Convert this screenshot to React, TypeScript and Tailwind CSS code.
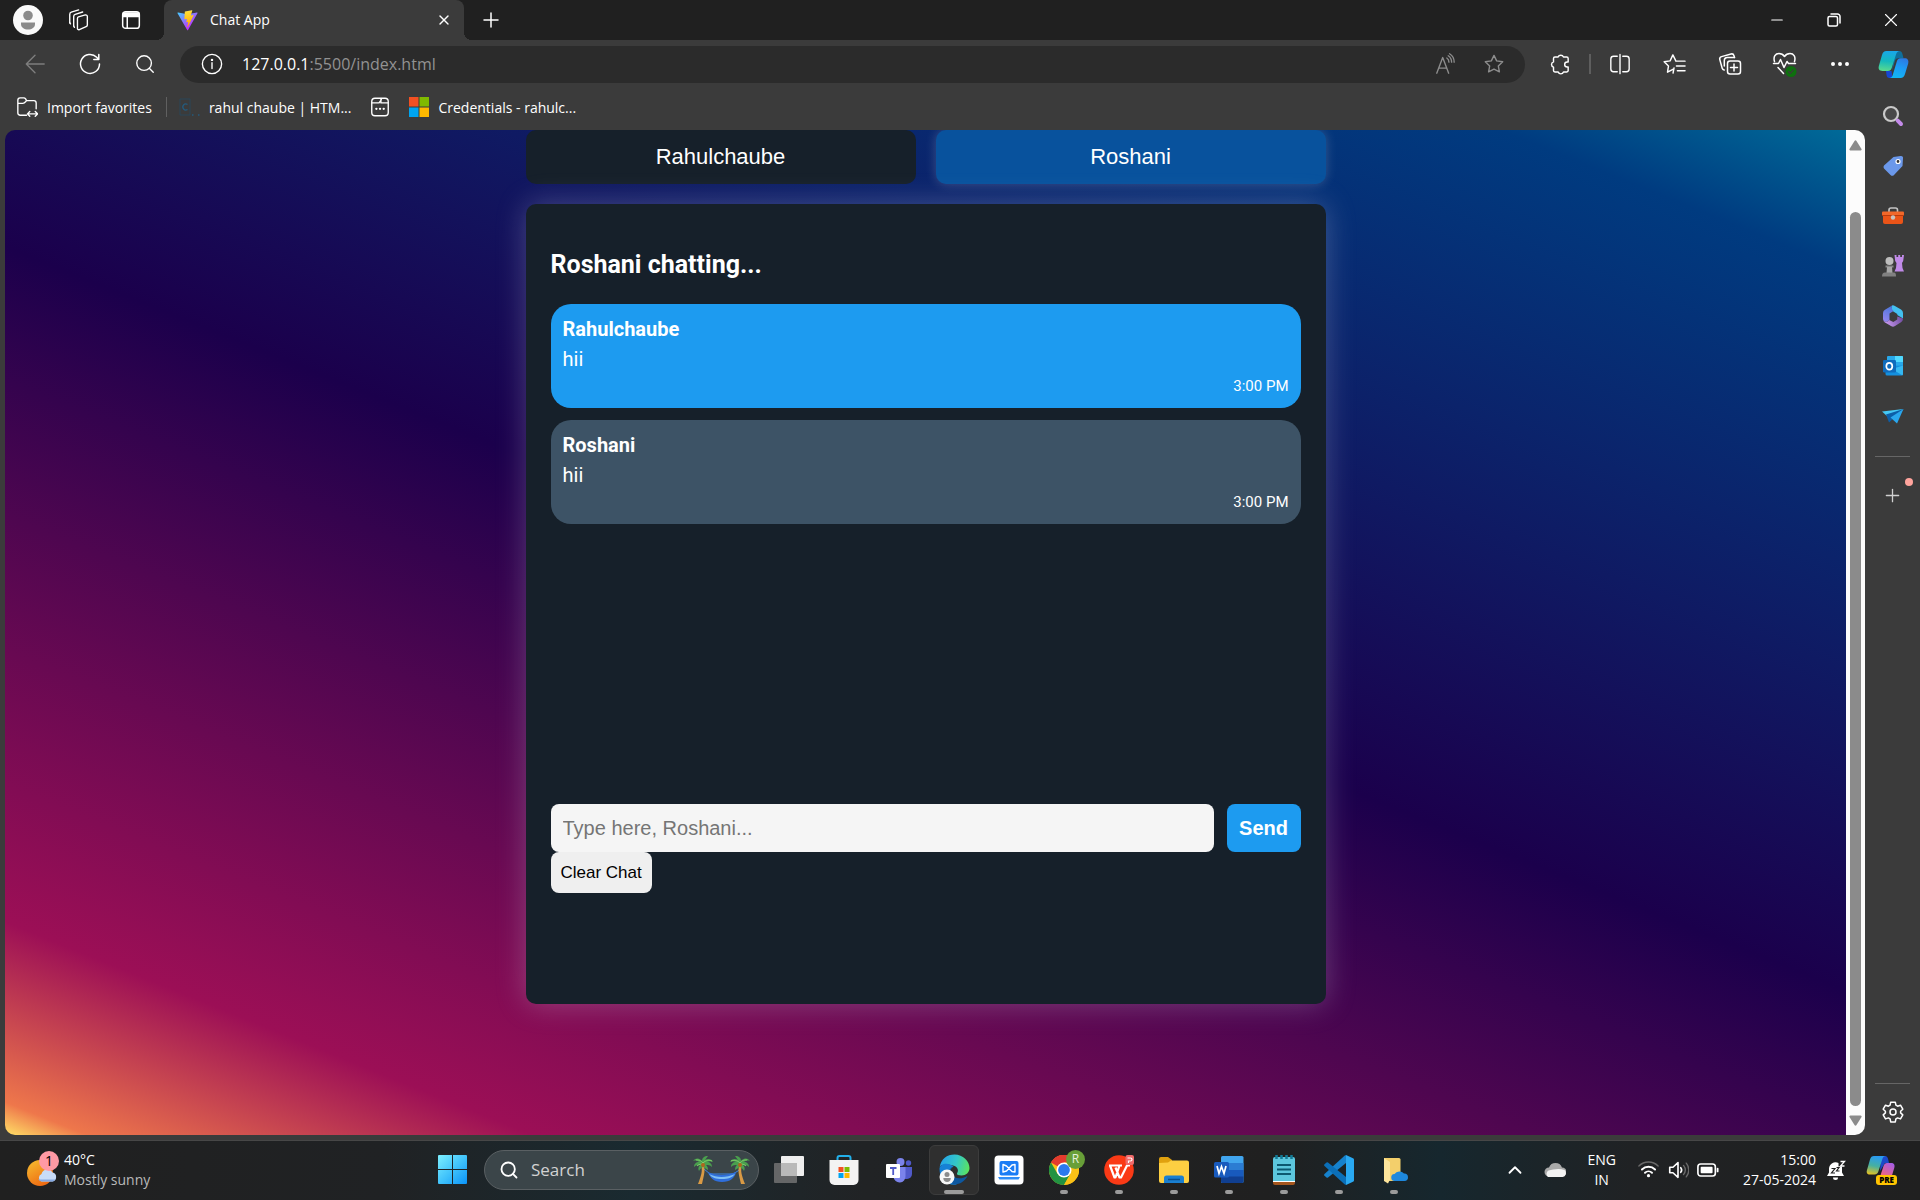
import React, { useState } from "react";
import {
  Search,
  X,
  Plus,
  Minus,
  ChevronUp,
  Ellipsis,
} from "lucide-react";

type IconProps = { size?: number; box?: string; children: React.ReactNode };

function Line({ size = 24, box = "0 0 24 24", children }: IconProps) {
  return (
    <svg width={size} height={size} viewBox={box} fill="none" stroke="currentColor" strokeWidth="1.5" strokeLinecap="round" strokeLinejoin="round" aria-hidden="true">
      {children}
    </svg>
  );
}

function Art({ size = 30, box = "0 0 30 30", children }: IconProps) {
  return (
    <svg width={size} height={size} viewBox={box} fill="none" aria-hidden="true">
      {children}
    </svg>
  );
}

const STAR = "M12 2.6l2.9 6 6.6.9-4.8 4.6 1.2 6.5L12 17.5l-5.9 3.1 1.2-6.5L2.5 9.5l6.6-.9z";

/* ---------- window chrome icons ---------- */

function Profile() {
  return (
    <Art>
      <circle cx="15" cy="15" r="15" fill="#fafafa" />
      <circle cx="15" cy="10.500" r="4.800" fill="#8b8b8b" />
      <path d="M8 17.500h14v1.500c0 3.600-3.200 5.500-7 5.500s-7-1.900-7-5.500z" fill="#8b8b8b" />
    </Art>
  );
}

function Workspaces() {
  return (
    <Line size={22}>
      <path d="M12.500 8.500l7.500-2a1.800 1.800 0 0 1 2.200 1.700v9.300c0 .9-.5 1.500-1.300 1.800l-7.500 3.200a1.400 1.400 0 0 1-2-1.300V10.300c0-.9.300-1.500 1.100-1.800z" />
      <path d="M7.300 18.500V8.300c0-1.200.6-2 1.600-2.400l8.200-2.600M3 15V6c0-1.300.6-2.100 1.700-2.500l8-2.500" />
      <path d="M7.300 18.500l.8 1.500M3 15l.8 1.200" />
    </Line>
  );
}

function TabActions() {
  return (
    <Line size={20}>
      <rect x="2" y="2" width="20" height="20" rx="3.500" strokeWidth="1.800" />
      <path d="M2.500 3.500h19v4.500h-19z" fill="currentColor" />
      <path d="M7.500 8v13.500" strokeWidth="1.800" />
    </Line>
  );
}

function ViteLogo() {
  return (
    <svg width="21" height="21" viewBox="0 0 410 404" fill="none" aria-hidden="true">
      <defs>
        <linearGradient id="viteBody" x1="6" y1="33" x2="235" y2="344" gradientUnits="userSpaceOnUse">
          <stop stopColor="#41d1ff" />
          <stop offset="1" stopColor="#bd34fe" />
        </linearGradient>
        <linearGradient id="viteBolt" x1="194.650" y1="8.800" x2="236" y2="293" gradientUnits="userSpaceOnUse">
          <stop stopColor="#ffea83" />
          <stop offset=".08" stopColor="#ffdd35" />
          <stop offset="1" stopColor="#ffa800" />
        </linearGradient>
      </defs>
      <path d="M399.641 59.525L215.643 388.545C211.844 395.338 202.084 395.378 198.228 388.618L10.582 59.556C6.381 52.190 12.680 43.267 21.028 44.759L205.223 77.682C206.398 77.892 207.601 77.890 208.776 77.676L389.119 44.806C397.439 43.290 403.768 52.143 399.641 59.525Z" fill="url(#viteBody)" />
      <path d="M292.965 1.574L156.801 28.255C154.563 28.694 152.906 30.590 152.771 32.866L144.395 174.330C144.198 177.662 147.258 180.248 150.510 179.498L188.420 170.749C191.967 169.931 195.172 173.055 194.443 176.622L183.180 231.775C182.422 235.487 185.907 238.661 189.532 237.560L212.947 230.446C216.577 229.344 220.065 232.527 219.297 236.242L201.398 322.875C200.278 328.294 207.486 331.249 210.492 326.603L212.500 323.500L323.454 102.072C325.312 98.365 322.108 94.137 318.036 94.923L279.014 102.454C275.347 103.161 272.227 99.746 273.262 96.158L298.731 7.867C299.767 4.273 296.636 .855 292.965 1.574Z" fill="url(#viteBolt)" />
    </svg>
  );
}

const Restore = () => (
  <Line size={14} box="0 0 14 14">
    <rect x="1" y="3.500" width="9.500" height="9.500" rx="1.500" />
    <path d="M4 1h6.500A2.500 2.500 0 0 1 13 3.500V10" />
  </Line>
);
const Back = () => (
  <Line size={22}>
    <path d="M22 12H2.500M12 2.500L2.500 12l9.500 9.500" />
  </Line>
);
const Reload = () => (
  <Line size={24}>
    <path d="M21.500 12A9.500 9.500 0 1 1 18.700 5.200l1.800 2M20.800 2.500v5h-5" />
  </Line>
);
const Info = () => (
  <Line size={22}>
    <circle cx="12" cy="12" r="10.500" />
    <path d="M12 10.500v6.500" />
    <circle cx="12" cy="7.500" r=".6" fill="currentColor" />
  </Line>
);
const ReadAloud = () => (
  <Line size={22}>
    <path d="M3 22L9.500 5 16 22M5.300 16.500h8.500M14 5.500c1.500 1 2.300 2.500 2.300 4.500M15.500 3c2.400 1.500 3.700 4 3.700 7M17 .8c3 1.800 5 4.800 5 9.200" />
  </Line>
);
const Puzzle = () => (
  <Line size={23}>
    <path d="M8.200 4.200h1.300a3 3 0 0 1 5.600 0h3.400a1.500 1.500 0 0 1 1.500 1.500v3.600h-1a2.600 2.600 0 0 0 0 5.300h1v3.700a1.500 1.500 0 0 1-1.500 1.500h-3.400a2.900 2.900 0 0 1-5.500 0H6.200a1.500 1.500 0 0 1-1.500-1.500v-3.600a2.800 2.800 0 0 1 0-5.400V5.700a1.500 1.500 0 0 1 1.500-1.500z" />
  </Line>
);
const Split = () => (
  <Line size={22}>
    <path d="M9 3.500H5A3 3 0 0 0 2 6.500v11a3 3 0 0 0 3 3h4M15 3.500h4a3 3 0 0 1 3 3v11a3 3 0 0 1-3 3h-4M12 1.500v21" />
  </Line>
);
const Favorites = () => (
  <Line size={23}>
    <path d="M13.500 8.500L10.300 2 7.400 8.200l-6.200.9 4.500 4.500-1 6.400 5.600-3M14.500 8.500H23M14 13.500h9M15 18.500h8M10.500 21l1-5.500" />
  </Line>
);
const Collections = () => (
  <Line size={24}>
    <rect x="9.500" y="9" width="13" height="13" rx="2.500" />
    <path d="M16 12v7M12.500 15.500h7M16.500 5.500l-.5-1.800A2.500 2.500 0 0 0 13 2L3.500 4.600a2.500 2.500 0 0 0-1.700 3l2.400 8.600c.3 1 1 1.600 2 1.800" />
    <path d="M6.300 14V8.500A3 3 0 0 1 9.300 5.500h7.200" />
  </Line>
);
const Essentials = () => (
  <Line size={25} box="0 0 25 25">
    <path d="M2.500 9.500C1 4.500 3.500 1.500 7 1.500c2.500 0 4.300 1.200 5.500 3 1.200-1.800 3-3 5.500-3 3.500 0 6 3 4.500 8M1.500 11.500h5l2-4 3.500 8 3-6 1.500 2h7M6 15.500l5.500 6" />
    <circle cx="19" cy="19.500" r="5.500" fill="#0e700e" stroke="none" />
    <path d="M16.600 19.700l1.700 1.600 3-3.300" stroke="#3b3b3b" strokeWidth="1.200" />
  </Line>
);
const ImportFolder = () => (
  <Line size={22}>
    <path d="M11.500 21H4.500A2.500 2.500 0 0 1 2 18.500v-14A2.500 2.500 0 0 1 4.500 2h4c1 0 1.500.5 2 1.200L11.500 5h8A2.500 2.500 0 0 1 22 7.500V14M2 8h5.500c1.500 0 2-.5 2.700-1.500L11.500 5M13 19.500h10M15 17l-2.500 2.500L15 22M21 17l2.500 2.500L21 22" />
  </Line>
);
const SavedPage = () => (
  <Line size={22}>
    <rect x="3" y="2.500" width="18" height="19" rx="3.500" />
    <path d="M3 7.500h8l2.500-3.500M13 3.500v4h8" />
    <path d="M8 14h.1M12 14h.1M16 14h.1" strokeWidth="2.500" />
  </Line>
);
const Gear = () => (
  <Line size={24}>
    <path d="M9.700 2.200h4.600l.6 3 1.700 1 2.900-1 2.300 4-2.200 2v1.700l2.200 2-2.300 4-2.900-1-1.700 1-.6 3H9.700l-.6-3-1.700-1-2.900 1-2.300-4 2.200-2v-1.700l-2.200-2 2.300-4 2.900 1 1.700-1z" />
    <circle cx="12" cy="12" r="3" />
  </Line>
);

function MicrosoftTiles() {
  return (
    <Art size={20} box="0 0 20 20">
      <path d="M0 0h9.500v9.500H0z" fill="#f25022" />
      <path d="M10.500 0H20v9.500h-9.500z" fill="#7fba00" />
      <path d="M0 10.500h9.500V20H0z" fill="#00a4ef" />
      <path d="M10.500 10.500H20V20h-9.500z" fill="#ffb900" />
    </Art>
  );
}

function Copilot() {
  return (
    <Art size={31} box="0 0 31 31">
      <defs>
        <linearGradient id="coA" x1="8" y1="2" x2="6" y2="22" gradientUnits="userSpaceOnUse">
          <stop stopColor="#19a7e8" />
          <stop offset=".5" stopColor="#14b8bd" />
          <stop offset="1" stopColor="#5bdb8d" />
        </linearGradient>
        <linearGradient id="coB" x1="26" y1="8" x2="18" y2="29" gradientUnits="userSpaceOnUse">
          <stop stopColor="#2f74e0" />
          <stop offset=".5" stopColor="#1d9bf5" />
          <stop offset="1" stopColor="#12b6f2" />
        </linearGradient>
      </defs>
      <path d="M17 2h4c2.500 0 3 1.500 3.700 4l.8 3.200h-5c-2 0-3 .8-3.500 2.500L14 22z" fill="#0f6f9c" />
      <path d="M8 22h5.500L14.500 29h-3c-2 0-2.700-1-3-3z" fill="#1647d2" />
      <path d="M8.500 2H22c-2.200 0-3.300 1.300-4 3.500l-4.200 13.300c-.7 2.200-1.800 3.200-4 3.200H4.500c-3.200 0-4.500-2-3.600-5.200L4 6c.8-2.800 2-4 4.500-4z" fill="url(#coA)" />
      <path d="M22.500 29H11c2 0 3.200-1.200 3.800-3.300l4-13.300c.7-2.200 1.800-3.200 4-3.200h3.700c3.200 0 4.500 2 3.700 5.200L27 25c-.8 2.800-2 4-4.500 4z" fill="url(#coB)" />
    </Art>
  );
}

/* ---------- sidebar icons ---------- */

const SideSearch = () => (
  <Art size={22} box="0 0 22 22">
    <circle cx="9" cy="9" r="7" stroke="#c9c9c9" strokeWidth="2.200" fill="#484848" />
    <path d="M15.700 15.700l3.300 3.300" stroke="#c48bea" strokeWidth="4" strokeLinecap="round" />
  </Art>
);
const SideTag = () => (
  <Art size={22} box="0 0 22 22">
    <path d="M11.500 2L18.500 1A2 2 0 0 1 21 3.500L20.500 11 12 20a2.500 2.500 0 0 1-3.500 0L2 13.500A2.500 2.500 0 0 1 2 10.500z" fill="#6b98ea" />
    <circle cx="16" cy="6.500" r="2" fill="#333" stroke="#fff" strokeWidth="1.200" />
  </Art>
);
const SideToolbox = () => (
  <Art size={22} box="0 0 22 22">
    <path d="M7 7V5a2 2 0 0 1 2-2h4.500a2 2 0 0 1 2 2v2" stroke="#c4c4c4" strokeWidth="1.600" />
    <rect y="6.500" width="22" height="4" rx="1" fill="#f2682a" />
    <path d="M1 10.500h20V17a2 2 0 0 1-2 2H3a2 2 0 0 1-2-2z" fill="#ea5418" />
    <path d="M0 10.500h22" stroke="#b93a0c" />
    <circle cx="11" cy="12.500" r="2.200" fill="#c9c4c0" />
  </Art>
);
const SideChess = () => (
  <Art size={22} box="0 0 22 22">
    <path d="M12.500 0h2v2h1.700V0h2v2H20V0h2l-.8 6-1.200 2 .5 5 1.500 3.500h-9.500L14 13l.5-5-1.300-2z" fill="#c08ae8" />
    <circle cx="7.500" cy="6" r="4" fill="#bdbdbd" />
    <path d="M3.500 10.500h8v2h-8z" fill="#8a8a8a" />
    <path d="M5 12h5l.5 6h-6z" fill="#a6a6a6" />
    <path d="M3 17.500h9c1.500 0 2 1.500 2 4H0c0-2.500 1-4 3-4z" fill="#808080" />
  </Art>
);
const SideM365 = () => (
  <Art size={22} box="0 0 22 22">
    <defs>
      <linearGradient id="m365a" x1="12" y1="0" x2="2" y2="18" gradientUnits="userSpaceOnUse">
        <stop stopColor="#3f74d8" />
        <stop offset="1" stopColor="#9a86f0" />
      </linearGradient>
      <linearGradient id="m365b" x1="4" y1="20" x2="21" y2="13" gradientUnits="userSpaceOnUse">
        <stop stopColor="#c99af0" />
        <stop offset="1" stopColor="#6e4a9e" />
      </linearGradient>
    </defs>
    <path d="M10 .5a3 3 0 0 1 2.500.2L19 4.500A4 4 0 0 1 21 8v5.500L15.300 10V9L9 5z" fill="#43c0f0" />
    <path d="M10.500.3L3 4.700A4 4 0 0 0 1 8v6a3 3 0 0 0 4.500 2.500L7.500 15V8.500L11.500 6c-2-2-2.300-4-1-5.700z" fill="url(#m365a)" />
    <path d="M1.300 15.500c1.500 2 3.500 1.500 5 .5l1-1 4 2 4-2.500V11.500L21 13.500c0 1.800-.7 3-2 3.800l-6 3.800a4 4 0 0 1-4 0L3 17.500a4 4 0 0 1-1.700-2z" fill="url(#m365b)" />
  </Art>
);
const SideOutlook = () => (
  <Art size={22} box="0 0 22 22">
    <path d="M5 2a1 1 0 0 1 1-1h14a1 1 0 0 1 1 1v10H5z" fill="#28a8ea" />
    <path d="M13 1h7a1 1 0 0 1 1 1v5h-8z" fill="#50d9ff" />
    <path d="M3.500 11L21 10.500V19a1.500 1.500 0 0 1-1.500 1.500H5A1.500 1.500 0 0 1 3.500 19z" fill="#1490df" />
    <path d="M21 10.500V19a1.500 1.500 0 0 1-.8 1.300L10 14z" fill="#35b8f1" />
    <rect x="1" y="5" width="13" height="12.500" rx="1.200" fill="#0f6cbd" />
    <ellipse cx="7.300" cy="11.200" rx="3" ry="3.400" stroke="#fff" strokeWidth="1.700" />
  </Art>
);
const SideTelegram = () => (
  <Art size={22} box="0 0 22 22">
    <path d="M0 6.500L21.500 4 6 12z" fill="#45c8f5" />
    <path d="M4 9.500L21.500 4 7 17.500z" fill="#0d5ea8" />
    <path d="M8.500 12.500L21.500 4 15 18.500z" fill="#2aa7ee" />
  </Art>
);

/* ---------- taskbar icons ---------- */

const Weather = () => (
  <Art size={34} box="0 0 34 34">
    <defs>
      <linearGradient id="sun" x1="4" y1="8" x2="18" y2="32" gradientUnits="userSpaceOnUse">
        <stop stopColor="#f5b92e" />
        <stop offset="1" stopColor="#ee6a12" />
      </linearGradient>
    </defs>
    <circle cx="14" cy="20" r="13" fill="url(#sun)" />
    <path d="M15.500 28.500a4 4 0 0 1 0-7.500 6 6 0 0 1 11-1.500 4.600 4.600 0 0 1 0 9z" fill="#c8dcf8" />
    <path d="M12 26.500h17.500l-2.500 2H15z" fill="#86a9e2" />
  </Art>
);
const Start = () => (
  <Art size={29} box="0 0 29 29">
    <defs>
      <linearGradient id="win" x1="0" y1="0" x2="29" y2="29" gradientUnits="userSpaceOnUse">
        <stop stopColor="#7df0ff" />
        <stop offset=".5" stopColor="#42c4fb" />
        <stop offset="1" stopColor="#0a93f8" />
      </linearGradient>
    </defs>
    <path d="M1 0h13v14H0V1a1 1 0 0 1 1-1zM15 0h13a1 1 0 0 1 1 1v13H15zM0 15h14v14H1a1 1 0 0 1-1-1zM15 15h14v13a1 1 0 0 1-1 1H15z" fill="url(#win)" />
  </Art>
);

function Palm({ flip }: { flip?: boolean }) {
  return (
    <g transform={flip ? "translate(57 0) scale(-1 1)" : undefined}>
      <path d="M10 9c3 5 1 11-1 20H5c3-8 5-13 3-19z" fill="#d99a45" />
      <path d="M10 7C7 3 3 2 0 6c3-1 5 0 6 1-3 0-5 2-5 5 2-2 4-2 6-2-2 2-2 4-1 6 1-2 2-3 4-4 2 1 3 2 5 3 0-3-1-4-2-5 2 0 4 0 6 2 0-3-2-5-5-5 2-1 4-1 6 0-1-3-5-4-8-2l3-4c-4 0-6 2-6 5z" fill="#4aa04e" />
      <path d="M10 8C8 5 5 5 3 5M10 8c3-3 6-3 9-2M9 9c-2 0-4 1-5 2" stroke="#86cf6b" />
      <circle cx="10" cy="10" r="2" fill="#b0651d" />
    </g>
  );
}
const Hammock = () => (
  <svg width="57" height="30" viewBox="0 0 57 30" fill="none" aria-hidden="true">
    <path d="M11 14l6 5h23l8-5" stroke="#3b86e8" />
    <path d="M15 17c8 4 18 4 28 0-1 6-6 10-14 10s-12-4-14-10z" fill="#2f6fdc" />
    <path d="M16 19c8 4 17 4 26 0-3 4-7 5-13 5s-10-1-13-5z" fill="#7fc0f4" />
    <Palm />
    <Palm flip />
  </svg>
);
const TaskView = () => (
  <Art size={30} box="0 0 30 30">
    <rect x="7" y="1" width="23" height="20" rx="1" fill="#eee" />
    <rect x="0" y="8" width="23" height="20" rx="1" fill="#777" fillOpacity=".8" />
    <path d="M7 8h16v13H7z" fill="#b9b9b9" />
  </Art>
);
const Store = () => (
  <Art>
    <path d="M8.500 6V3a2 2 0 0 1 2-2h9a2 2 0 0 1 2 2v3" stroke="#22b0ea" strokeWidth="2" />
    <path d="M.5 5h29v20a5 5 0 0 1-5 5h-19a5 5 0 0 1-5-5z" fill="#f3f3f3" />
    <path d="M9.500 12h5v5h-5z" fill="#f25022" />
    <path d="M15.500 12h5v5h-5z" fill="#7fba00" />
    <path d="M9.500 18h5v5h-5z" fill="#00a4ef" />
    <path d="M15.500 18h5v5h-5z" fill="#ffb900" />
  </Art>
);
const Teams = () => (
  <Art size={28} box="0 0 28 28">
    <circle cx="15.500" cy="6" r="4" fill="#7b83eb" />
    <circle cx="23.500" cy="7" r="2.700" fill="#5059c9" />
    <path d="M18 11h9v7a5 5 0 0 1-5 5h-4z" fill="#5059c9" />
    <path d="M8 11h12.500v9a6 6 0 0 1-12 1z" fill="#7b83eb" />
    <rect x="1" y="8" width="14" height="14" rx="1" fill="#fff" />
    <path d="M5 12h6.500M8.200 12v7" stroke="#5059c9" strokeWidth="1.800" />
  </Art>
);
const Edge = () => (
  <Art size={31} box="0 0 31 31">
    <defs>
      <linearGradient id="edgeTop" x1="2" y1="8" x2="30" y2="16" gradientUnits="userSpaceOnUse">
        <stop stopColor="#25a5e8" />
        <stop offset=".5" stopColor="#33c6c8" />
        <stop offset="1" stopColor="#5ce55c" />
      </linearGradient>
    </defs>
    <path d="M.7 13C2 5 8 .5 15.500.5 24 .5 30.500 7 30.500 14c0 4.500-3.500 7.500-8 7.500-3 0-5-1-4.500-2.300 2-2.200 1-6.700-4-7.700C8 10 2.500 10 .7 13z" fill="url(#edgeTop)" />
    <path d="M.5 15c0-4.500 6-6.500 10.500-4.500 2.500 1 3.500 2 3.500 2-4 2-6 6-4 11 1.500 4 4 6.500 7.500 7C8 32 .5 25 .5 15z" fill="#1681d6" />
    <path d="M14.500 12.500c-3 2-4 5-2 8 2.500 4 9 5.500 16 1.500-3 6-9 9-14 8.300-6-3-8-14 0-17.800z" fill="#0d579f" />
    <circle cx="8" cy="23" r="7.500" fill="#f7f7f7" />
    <circle cx="8" cy="20.500" r="2.500" fill="#8b8b8b" />
    <path d="M4.300 24h7.500c0 2.700-1.600 4-3.700 4s-3.800-1.300-3.800-4z" fill="#8b8b8b" />
  </Art>
);
const Laptop = () => (
  <Art>
    <rect x=".5" y=".5" width="29" height="29" rx="4" fill="#fff" />
    <rect x="5.500" y="6" width="19" height="14.500" rx="2" fill="#1b7cf5" />
    <path d="M4 22h22l-1.500 2.500h-19z" fill="#2f8df8" />
    <path d="M9 17V9.500l3.500 1.500 5.500 5.500 3 .5V9.500l-3 .5-5.500 6z" stroke="#fff" strokeWidth="1.400" strokeLinejoin="round" />
  </Art>
);
const Chrome = () => (
  <Art>
    <circle cx="15" cy="15" r="15" fill="#fbc116" />
    <path d="M15 15L2 7.500A15 15 0 0 1 28 7.500H15z" fill="#e33b2e" />
    <path d="M15 7.500h13A15 15 0 0 0 2 7.500z" fill="#e33b2e" />
    <path d="M2 7.500A15 15 0 0 0 15 30l6.500-11.300L15 15 8.500 18.700z" fill="#229342" />
    <path d="M21.500 18.700L15 30A15 15 0 0 0 28 7.500H15z" fill="#fbc116" />
    <circle cx="15" cy="15" r="7.500" fill="#fff" />
    <circle cx="15" cy="15" r="5.900" fill="#2a79ee" />
  </Art>
);
const Wps = () => (
  <Art>
    <circle cx="15" cy="15" r="14.800" fill="#fa3a16" />
    <path d="M5 10.500h13M6 10.500l4.500 12h1l4-12M11.500 12.500l4 10h1.500l6-12h3" stroke="#fff" strokeWidth="2.200" strokeLinejoin="round" />
    <rect x="21.500" y="0" width="8.500" height="10" rx="2" fill="#f06a6a" />
    <path d="M23.500 3h3a1.500 1.500 0 0 1 0 3h-2v2" stroke="#fff" strokeWidth="1.200" />
  </Art>
);
const Explorer = () => (
  <Art>
    <path d="M0 4a2 2 0 0 1 2-2h7l4 3v5H0z" fill="#e0a10f" />
    <path d="M0 8l9-.5L12 5.500h16a2 2 0 0 1 2 2V26a2 2 0 0 1-2 2H2a2 2 0 0 1-2-2z" fill="#fdcf42" />
    <path d="M5 28v-5a2.500 2.500 0 0 1 2.500-2.500h15A2.500 2.500 0 0 1 25 23v5z" fill="#1a7fd0" />
    <path d="M9 24.500h12" stroke="#0b4f8c" strokeWidth="1.500" />
  </Art>
);
const Word = () => (
  <Art>
    <rect x="7" y="1" width="22.500" height="27" rx="1.500" fill="#41a5ee" />
    <path d="M7 8h22.500v7H7z" fill="#2b7cd3" />
    <path d="M7 15h22.500v7H7z" fill="#185abd" />
    <path d="M7 21.500h22.500v5A1.500 1.500 0 0 1 28 28H8.500A1.500 1.500 0 0 1 7 26.500z" fill="#103f91" />
    <rect x="0" y="7" width="15" height="15.500" rx="1.500" fill="#185abd" />
    <path d="M3 11l2 7.500L7.500 11.500 10 18.500 12 11" stroke="#fff" strokeWidth="1.700" />
  </Art>
);
const Notepad = () => (
  <Art>
    <path d="M4 25h22v3a2 2 0 0 1-2 2H6a2 2 0 0 1-2-2z" fill="#a5561d" />
    <path d="M4 24h22v3H4z" fill="#fff" />
    <path d="M4 4a2 2 0 0 1 2-2h18a2 2 0 0 1 2 2v22H4z" fill="#5cc6dd" />
    <path d="M8 10h14M8 14.500h14M8 19h14" stroke="#0c5870" strokeWidth="1.800" />
    <path d="M7.500 0v4M12.500 0v4M17.500 0v4M22.500 0v4" stroke="#127b96" strokeWidth="2.500" />
  </Art>
);
const VsCode = () => (
  <Art>
    <path d="M22 30l7-3.300a1.500 1.500 0 0 0 1-1.500V4.700a1.500 1.500 0 0 0-1-1.400L22 0z" fill="#29a9f2" />
    <path d="M22 0v8L4 22.500a1.200 1.200 0 0 1-1.500 0L.5 20.800a1.200 1.200 0 0 1 0-1.700L20.500.7z" fill="#1682cd" />
    <path d="M22 30v-8L4 7.500a1.200 1.200 0 0 0-1.500 0L.5 9.200a1.200 1.200 0 0 0 0 1.700l20 18.400z" fill="#0b6fb8" />
  </Art>
);
const CloudFolder = () => (
  <Art>
    <path d="M5 3h15a1.500 1.500 0 0 1 1.500 1.500V26H5z" fill="#f3cf6b" />
    <path d="M5 3l6 4v17.500l-2 4L5 26z" fill="#fde59c" />
    <path d="M16 26a3.500 3.500 0 0 1-.5-7A6 6 0 0 1 25 18.500a3.700 3.700 0 0 1 .5 7.500z" fill="#1e88dd" />
  </Art>
);
const Cloud = () => (
  <Art size={22} box="0 0 22 22">
    <path d="M5 17.500a4.500 4.500 0 0 1 0-9A7 7 0 0 1 18 8.500a4.500 4.500 0 0 1 0 9z" fill="#a9a9a9" />
    <path d="M4 18a4 4 0 0 1 .5-6.500C9 10.500 15 9 20.500 11a4 4 0 0 1-2 7z" fill="#f3f3f3" />
  </Art>
);
const Wifi = () => (
  <Line size={21}>
    <path d="M1 8a15.500 15.500 0 0 1 22 0" stroke="#6a6a6a" />
    <path d="M4.500 12a10.700 10.700 0 0 1 15 0M8 15.700a5.800 5.800 0 0 1 8 0" strokeWidth="2.200" />
    <circle cx="12" cy="19" r="1.800" fill="currentColor" stroke="none" />
  </Line>
);
const Speaker = () => (
  <Line size={22}>
    <path d="M3 9h3.500L12 4v16l-5.500-5H3z" strokeWidth="1.800" />
    <path d="M15 9.500a4 4 0 0 1 0 5" strokeWidth="1.800" />
    <path d="M18 7a8 8 0 0 1 0 10M21 4.500a11.500 11.500 0 0 1 0 15" stroke="#6a6a6a" />
  </Line>
);
const Battery = () => (
  <Line size={22}>
    <rect x="1" y="5.500" width="19" height="13" rx="3" strokeWidth="1.800" />
    <rect x="4" y="8.500" width="13" height="7" rx="1" fill="currentColor" stroke="none" />
    <path d="M22.500 10.500v3" strokeWidth="2" />
  </Line>
);
const Bell = () => (
  <Art size={20} box="0 0 20 20">
    <path d="M1 16l2-3.500V8.500A6.500 6.500 0 0 1 12.500 3v3.500H16v6l2 3.500z" fill="#fff" />
    <path d="M7 17.500h5a2.500 2.500 0 0 1-5 0z" fill="#fff" />
    <path d="M5.500 8.500h3.500l-3.500 4.500H9M10.500 7.500h2.500l-2.500 3.500h3" stroke="#202020" strokeWidth="1.200" />
    <path d="M14.500 1.500h4l-4 4.500h4" stroke="#fff" strokeWidth="1.300" />
  </Art>
);
const CopilotPre = () => (
  <Art size={30} box="0 0 30 30">
    <defs>
      <linearGradient id="preA" x1="8" y1="1" x2="4" y2="20" gradientUnits="userSpaceOnUse">
        <stop stopColor="#2a9bf0" />
        <stop offset=".5" stopColor="#46b0a0" />
        <stop offset="1" stopColor="#f2c319" />
      </linearGradient>
      <linearGradient id="preB" x1="26" y1="8" x2="18" y2="22" gradientUnits="userSpaceOnUse">
        <stop stopColor="#a45de8" />
        <stop offset="1" stopColor="#f4667c" />
      </linearGradient>
    </defs>
    <path d="M15 1h4c2 0 2.700 1.500 3.200 3.500L23 8h-4l-5 8z" fill="#1c49c9" />
    <path d="M8 1h12c-2 0-3 1.200-3.700 3.200L12.500 16c-.6 2-1.700 3.500-4 3.500H4C1 19.500.2 17.500 1 15L4 4.500C4.700 2 6 1 8 1z" fill="url(#preA)" />
    <path d="M14 22l3.500-11c.7-2 1.700-3 3.500-3h4c3 0 4 2 3.300 4.800L25.500 22z" fill="url(#preB)" />
  </Art>
);

/* ---------- page parts ---------- */

function IconButton({ label, children, className = "" }: { label: string; children: React.ReactNode; className?: string }) {
  return (
    <button type="button" aria-label={label} className={"flex h-10 w-[55px] shrink-0 items-center justify-center " + className}>
      {children}
    </button>
  );
}

function TabStrip() {
  return (
    <header className="flex h-10 shrink-0 items-stretch bg-[#202020]">
      <div className="flex w-[164px] items-center gap-8 pl-[13px]">
        <button type="button" aria-label="Profile" className="-mr-2"><Profile /></button>
        <button type="button" aria-label="Workspaces"><Workspaces /></button>
        <button type="button" aria-label="Tab actions"><TabActions /></button>
      </div>
      <div className="relative flex w-[300px] items-center gap-3 rounded-t-lg bg-[#3b3b3b] pr-3 pl-[13px]">
        <span className="absolute bottom-0 -left-2 size-2 bg-[radial-gradient(circle_at_0_0,#202020_8px,#3b3b3b_8px)]" />
        <span className="absolute -right-2 bottom-0 size-2 bg-[radial-gradient(circle_at_100%_0,#202020_8px,#3b3b3b_8px)]" />
        <ViteLogo />
        <span className="flex-1 pb-[2px] text-[14px]">Chat App</span>
        <button type="button" aria-label="Close tab"><X size={16} strokeWidth={2} /></button>
      </div>
      <button type="button" aria-label="New tab" className="flex w-[53px] items-center justify-center"><Plus size={24} strokeWidth={1.500} /></button>
      <div className="flex-1" />
      <button type="button" aria-label="Minimize" className="flex w-[57px] items-center justify-center"><Minus size={18} strokeWidth={1.500} /></button>
      <button type="button" aria-label="Restore" className="flex w-[57px] items-center justify-center"><Restore /></button>
      <button type="button" aria-label="Close" className="flex w-[58px] items-center justify-center"><X size={22} strokeWidth={1.200} /></button>
    </header>
  );
}

function Toolbar() {
  return (
    <div className="flex h-12 shrink-0 items-center pl-[7px]">
      <IconButton label="Back" className="text-[#7e7e7e]"><Back /></IconButton>
      <IconButton label="Reload"><Reload /></IconButton>
      <IconButton label="Search"><Search size={22} strokeWidth={1.500} /></IconButton>
      <div className="mx-2 flex h-[37px] flex-1 items-center rounded-full bg-[#2b2b2b] pl-[21px]">
        <Info />
        <p className="ml-[19px] flex-1 text-[16px] text-[#929292]"><span className="text-white">127.0.0.1</span>:5500/index.html</p>
        <button type="button" aria-label="Read aloud" className="mr-[27px] text-[#8d8d8d]"><ReadAloud /></button>
        <button type="button" aria-label="Add to favorites" className="mr-5 text-[#8d8d8d]"><Line size={22}><path d={STAR} /></Line></button>
      </div>
      <IconButton label="Extensions"><Puzzle /></IconButton>
      <span className="mx-[1px] h-5 w-[2px] bg-[#5e5e5e]" />
      <IconButton label="Split screen"><Split /></IconButton>
      <IconButton label="Favorites"><Favorites /></IconButton>
      <IconButton label="Collections"><Collections /></IconButton>
      <IconButton label="Browser essentials"><Essentials /></IconButton>
      <IconButton label="Settings and more"><Ellipsis size={24} strokeWidth={2} /></IconButton>
      <button type="button" aria-label="Copilot" className="flex w-[53px] shrink-0 items-center justify-center"><Copilot /></button>
    </div>
  );
}

function Bookmarks() {
  return (
    <nav className="flex h-[42px] shrink-0 items-center pb-1 pl-[11px] text-[14px]">
      <a href="#import" className="flex items-center gap-[9px]"><ImportFolder />Import favorites</a>
      <span className="mr-3 ml-[14px] h-5 w-px bg-[#606060]" />
      <a href="#site" className="flex items-center gap-[9px]">
        <Art size={21} box="0 0 21 21">
          <path d="M1 2h10v16H1z" stroke="#2b4658" />
          <path d="M8.500 7.500a3 3 0 1 0 0 5M13 18h1.500M19 18h1.500" stroke="#245b7d" strokeWidth="1.300" />
        </Art>
        rahul chaube | HTM...
      </a>
      <a href="#saved" aria-label="Saved page" className="ml-[18px]"><SavedPage /></a>
      <a href="#credentials" className="ml-[18px] flex items-center gap-[9px]"><MicrosoftTiles />Credentials - rahulc...</a>
    </nav>
  );
}

const SIDE = [
  { label: "Search", icon: <SideSearch /> },
  { label: "Shopping", icon: <SideTag /> },
  { label: "Tools", icon: <SideToolbox /> },
  { label: "Games", icon: <SideChess /> },
  { label: "Microsoft 365", icon: <SideM365 /> },
  { label: "Outlook", icon: <SideOutlook /> },
  { label: "Drop", icon: <SideTelegram /> },
];

function Sidebar() {
  return (
    <aside className="flex w-[55px] shrink-0 flex-col items-center pt-[3px]">
      {SIDE.map((s) => (
        <button key={s.label} type="button" aria-label={s.label} className="flex h-[50px] w-full items-center justify-center">{s.icon}</button>
      ))}
      <span className="mt-[15px] h-px w-[35px] bg-[#666]" />
      <button type="button" aria-label="Customize" className="relative mt-[13px] flex h-[50px] w-full items-center justify-center text-[#d0d0d0]">
        <Plus size={21} strokeWidth={1.500} />
        <span className="absolute top-2 right-[7px] size-2 rounded-full bg-[#ffa49d]" />
      </button>
      <span className="mt-auto h-px w-[35px] bg-[#666]" />
      <button type="button" aria-label="Settings" className="flex h-14 w-full items-center justify-center"><Gear /></button>
    </aside>
  );
}

const PEOPLE = ["Rahulchaube", "Roshani"];
const MESSAGES = [
  { from: "Rahulchaube", text: "hii", time: "3:00 PM" },
  { from: "Roshani", text: "hii", time: "3:00 PM" },
];

function Chat() {
  const [me, setMe] = useState("Roshani");
  const [messages, setMessages] = useState(MESSAGES);
  const [draft, setDraft] = useState("");

  const send = (e: React.FormEvent) => {
    e.preventDefault();
    if (!draft) return;
    setMessages([...messages, { from: me, text: draft, time: "3:00 PM" }]);
    setDraft("");
  };

  return (
    <main className="flex-1 overflow-hidden bg-[linear-gradient(22deg,#ffe066_0%,#ee774b_1.9%,#9c0f56_12.2%,#1b004c_50.8%,#003b80_92%,#006a98_100%)] font-['Roboto',sans-serif]">
      <div className="mx-auto flex max-w-[800px] flex-col gap-5">
        <div className="flex gap-5 font-['Liberation_Sans',sans-serif]">
          {PEOPLE.map((p) => (
            <button
              key={p}
              type="button"
              onClick={() => setMe(p)}
              className={
                "h-[54px] flex-1 rounded-[10px] pb-[2px] text-[22px] " +
                (p === me ? "bg-[#08529d] shadow-[0_0_12px_rgba(255,255,255,0.2)]" : "bg-[#16202a]")
              }
            >
              {p}
            </button>
          ))}
        </div>
        <section className="rounded-[10px] bg-[#16202a] px-[25px] pt-[43px] pb-[111px] shadow-[0_0_30px_rgba(235,235,255,0.25)]">
          <h2 className="mb-[21px] text-[25px] leading-9 font-bold">{me} chatting...</h2>
          <div className="flex h-[500px] flex-col gap-3 overflow-auto">
            {messages.map((m, i) => (
              <article key={i} className={"flex flex-col rounded-[20px] px-3 pt-[10px] pb-[10px] text-[20px] leading-[30px] " + (m.from === me ? "bg-[#3d5366]" : "bg-[#1d9bf0]")}>
                <strong className="font-bold">{m.from}</strong>
                <span>{m.text}</span>
                <time className="self-end text-[15px] leading-6">{m.time}</time>
              </article>
            ))}
          </div>
          <form onSubmit={send} className="flex gap-[13px] font-['Liberation_Sans',sans-serif] text-[20px]">
            <input
              aria-label="Message"
              value={draft}
              onChange={(e) => setDraft(e.target.value)}
              placeholder={`Type here, ${me}...`}
              className="h-12 min-w-0 flex-1 rounded-lg bg-[#f5f5f5] px-3 text-black placeholder:text-[#757575]"
            />
            <button type="submit" className="h-12 w-[74px] rounded-lg bg-[#1d9bf0] font-bold">Send</button>
          </form>
          <button type="button" onClick={() => setMessages([])} className="block h-[41px] rounded-lg bg-[#efefef] px-[10px] font-['Liberation_Sans',sans-serif] text-[17px] text-black">
            Clear Chat
          </button>
        </section>
      </div>
    </main>
  );
}

function Scrollbar() {
  return (
    <div className="flex w-[19px] shrink-0 flex-col items-center bg-[#fcfcfc] pt-[9px] pb-2">
      <Art size={13} box="0 0 13 11"><path d="M5.500 1a1.200 1.200 0 0 1 2 0l5 8a1 1 0 0 1-1 1.500h-10A1 1 0 0 1 .5 9z" fill="#8b8b8b" /></Art>
      <div className="mt-[60px] w-[11px] flex-1 rounded-full bg-[#8b8b8b]" />
      <div className="mt-2"><Art size={13} box="0 0 13 11"><path d="M5.500 10a1.200 1.200 0 0 0 2 0l5-8a1 1 0 0 0-1-1.500h-10A1 1 0 0 0 .5 2z" fill="#8b8b8b" /></Art></div>
    </div>
  );
}

const APPS: { label: string; icon: React.ReactNode; state?: "open" | "active"; badge?: string }[] = [
  { label: "Task view", icon: <TaskView /> },
  { label: "Microsoft Store", icon: <Store /> },
  { label: "Teams", icon: <Teams /> },
  { label: "Edge", icon: <Edge />, state: "active" },
  { label: "PC Manager", icon: <Laptop /> },
  { label: "Chrome", icon: <Chrome />, state: "open", badge: "R" },
  { label: "WPS", icon: <Wps />, state: "open" },
  { label: "File Explorer", icon: <Explorer />, state: "open" },
  { label: "Word", icon: <Word />, state: "open" },
  { label: "Notepad", icon: <Notepad />, state: "open" },
  { label: "VS Code", icon: <VsCode />, state: "open" },
  { label: "OneDrive folder", icon: <CloudFolder />, state: "open" },
];

function Taskbar() {
  return (
    <footer className="flex h-[60px] shrink-0 items-center border-t border-[#474747] bg-[linear-gradient(90deg,#202020_0%,#202224_20%,#1a2a30_33%,#212325_45%,#202020_66%,#16272e_75%,#202224_85%,#202020_100%)] pb-[2px]">
      <div className="flex w-[427px] items-center pl-[26px]">
        <div className="relative">
          <Weather />
          <span className="absolute -top-[2px] left-[13px] flex size-5 items-center justify-center rounded-full bg-[#ff99a4] text-[14px] text-black">1</span>
        </div>
        <p className="ml-1 text-[14px] leading-5">40°C<br /><span className="text-[#b9b9b9]">Mostly sunny</span></p>
      </div>
      <button type="button" aria-label="Start" className="flex size-[50px] items-center justify-center"><Start /></button>
      <label className="mr-[5px] ml-[7px] flex h-10 w-[275px] items-center rounded-full border border-[#5a6063] bg-[#3b4549] pr-2 pl-[14px]">
        <Search size={20} strokeWidth={2.200} />
        <input aria-label="Search" placeholder="Search" className="ml-3 w-full min-w-0 flex-1 bg-transparent text-[17px] placeholder:text-[#d2d2d2]" />
        <Hammock />
      </label>
      <div className="flex gap-[5px]">
        {APPS.map((a) => (
          <button
            key={a.label}
            type="button"
            aria-label={a.label}
            className={"relative flex size-[50px] items-center justify-center rounded-md border " + (a.state === "active" ? "border-[#3c3c3c] bg-[#2f2f2f]" : "border-transparent")}
          >
            {a.icon}
            {a.badge && <span className="absolute top-1 right-[3px] flex size-[19px] items-center justify-center rounded-full bg-[#689f38] text-[12px] leading-none text-[#e6f0dc]">{a.badge}</span>}
            {a.state && <span className={"absolute bottom-0 h-1 rounded-full bg-[#9b9b9b] " + (a.state === "active" ? "w-5" : "w-2")} />}
          </button>
        ))}
      </div>
      <div className="ml-auto flex items-center pr-6 text-[14px] leading-5">
        <button type="button" aria-label="Hidden icons"><ChevronUp size={22} strokeWidth={2} /></button>
        <span className="ml-[18px]"><Cloud /></span>
        <p className="ml-[21px] text-center">ENG<br />IN</p>
        <span className="ml-[22px] flex gap-2"><Wifi /><Speaker /><Battery /></span>
        <p className="ml-6 text-right">15:00<br />27-05-2024</p>
        <span className="ml-[10px]"><Bell /></span>
        <span className="relative ml-5">
          <CopilotPre />
          <span className="absolute -right-[1px] bottom-0 flex h-[10px] items-center rounded-[3px] bg-[#ffc400] px-[3px] text-[8px] leading-none font-extrabold text-black">PRE</span>
        </span>
      </div>
    </footer>
  );
}

export default function App() {
  return (
    <div className="flex h-screen flex-col overflow-hidden bg-[#3b3b3b] font-['Open_Sans','Noto_Sans',sans-serif] text-white">
      <TabStrip />
      <Toolbar />
      <div className="flex min-h-0 flex-1">
        <div className="flex min-w-0 flex-1 flex-col pb-[5px] pl-[5px]">
          <Bookmarks />
          <div className="flex min-h-0 flex-1 overflow-hidden rounded-[10px]">
            <Chat />
            <Scrollbar />
          </div>
        </div>
        <Sidebar />
      </div>
      <Taskbar />
    </div>
  );
}
